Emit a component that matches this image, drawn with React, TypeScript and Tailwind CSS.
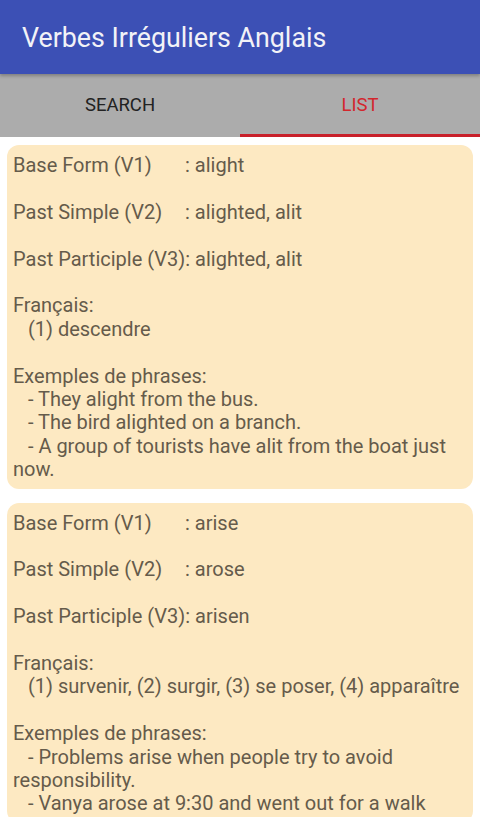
import React from 'react';

interface Verb {
  v1: string;
  v2: string;
  v3: string;
  fr: string;
  examples: string[];
}

const verbs: Verb[] = [
  {
    v1: 'alight',
    v2: 'alighted, alit',
    v3: 'alighted, alit',
    fr: '(1) descendre',
    examples: [
      'They alight from the bus.',
      'The bird alighted on a branch.',
      'A group of tourists have alit from the boat just now.',
    ],
  },
  {
    v1: 'arise',
    v2: 'arose',
    v3: 'arisen',
    fr: '(1) survenir, (2) surgir, (3) se poser, (4) apparaître',
    examples: [
      'Problems arise when people try to avoid responsibility.',
      'Vanya arose at 9:30 and went out for a walk',
    ],
  },
];

function VerbCard({ verb }: { verb: Verb }) {
  return (
    <div className="mx-[7px] mb-[14px] rounded-[12px] bg-[#fde9c2] px-[6px] pt-[9px] pb-[7px] text-[20px] leading-[23.4px] text-[#655b4b]">
      <p>
        <span className="inline-block w-[172px]">Base Form (V1)</span>: {verb.v1}
      </p>
      <p className="mt-[23.4px]">
        <span className="inline-block w-[172px]">Past Simple (V2)</span>: {verb.v2}
      </p>
      <p className="mt-[23.4px]">Past Participle (V3): {verb.v3}</p>
      <p className="mt-[23.4px]">Français:</p>
      <p className="whitespace-pre-wrap">{'   ' + verb.fr}</p>
      <p className="mt-[23.4px]">Exemples de phrases:</p>
      {verb.examples.map((ex) => (
        <p key={ex} className="whitespace-pre-wrap">
          {'   - ' + ex}
        </p>
      ))}
    </div>
  );
}

export default function App() {
  return (
    <div className="h-[817px] overflow-hidden bg-white font-['Roboto',sans-serif]">
      {/* App bar */}
      <div className="relative z-10 flex h-[74px] items-center bg-[#3c50b5] px-[22px] shadow-[0_2px_3px_rgba(0,0,0,0.25)]">
        <h1 className="pt-[3px] text-[26.8px] text-[#f2f2f7]">Verbes Irréguliers Anglais</h1>
      </div>

      {/* Tabs */}
      <div className="flex h-[63px] bg-[#acacac]">
        <div className="flex flex-1 items-center justify-center pt-[1px] text-[18.5px] text-[#222222]">
          SEARCH
        </div>
        <div className="flex flex-1 flex-col">
          <div className="flex flex-1 items-center justify-center pt-[4px] text-[18.5px] text-[#d3262c]">LIST</div>
          <div className="h-[3px] bg-[#c8202a]" />
        </div>
      </div>

      {/* List */}
      <div className="pt-[8px]">
        {verbs.map((v) => (
          <VerbCard key={v.v1} verb={v} />
        ))}
      </div>
    </div>
  );
}
